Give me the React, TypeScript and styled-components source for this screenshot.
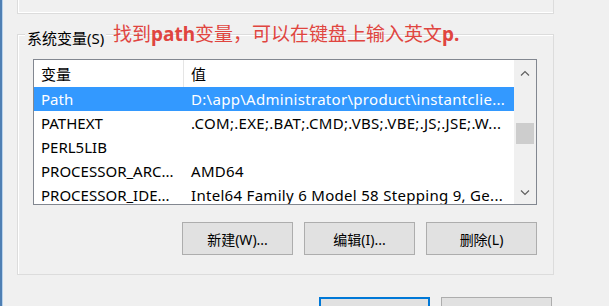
import React from "react";
import styled, { createGlobalStyle } from "styled-components";

const GlobalStyle = createGlobalStyle`
  html, body {
    margin: 0;
    padding: 0;
    background: #f0f0f0;
  }
  body {
    font-family: "Noto Sans", "Noto Sans CJK SC", sans-serif;
  }
`;

const rows = [
  { name: "Path", value: "D:\\app\\Administrator\\product\\instantclie...", selected: true },
  { name: "PATHEXT", value: ".COM;.EXE;.BAT;.CMD;.VBS;.VBE;.JS;.JSE;.W..." },
  { name: "PERL5LIB", value: "" },
  { name: "PROCESSOR_ARC...", value: "AMD64" },
  { name: "PROCESSOR_IDE...", value: "Intel64 Family 6 Model 58 Stepping 9, Ge..." },
];

const ChevronUp = () => (
  <svg width="10" height="6" viewBox="0 0 10 6">
    <polyline points="1,5.5 5,1.5 9,5.5" fill="none" stroke="#606060" strokeWidth="1.2" />
  </svg>
);

const ChevronDown = () => (
  <svg width="10" height="6" viewBox="0 0 10 6">
    <polyline points="1,0.5 5,4.5 9,0.5" fill="none" stroke="#606060" strokeWidth="1.2" />
  </svg>
);

const App = () => {
  return (
    <>
      <GlobalStyle />
      <Window>
        <Edge />
        <Main>
          <TopGroup />
          <SysGroup>
            <Legend>系统变量(S)</Legend>
            <ListBox>
              <ListBody>
                <HeaderRow>
                  <NameCell>变量</NameCell>
                  <ValueCell>值</ValueCell>
                </HeaderRow>
                {rows.map((r) => (
                  <Row key={r.name} $selected={!!r.selected}>
                    <NameCell>{r.name}</NameCell>
                    <ValueCell>{r.value}</ValueCell>
                  </Row>
                ))}
              </ListBody>
              <ScrollBar>
                <ChevronUp />
                <Track>
                  <Thumb />
                </Track>
                <ChevronDown />
              </ScrollBar>
            </ListBox>
            <ButtonRow>
              <Button>新建(W)...</Button>
              <Button>编辑(I)...</Button>
              <Button>删除(L)</Button>
            </ButtonRow>
          </SysGroup>
          {/* labels of these two sit below the visible area */}
          <Footer>
            <Button $primary aria-label="确定" />
            <Button aria-label="取消" />
          </Footer>
        </Main>
        <Note>
          找到<b>path</b>变量，可以在键盘上输入英文<b>p.</b>
        </Note>
      </Window>
    </>
  );
};

export default App;

const Window = styled.div`
  position: relative;
  display: flex;
  width: 609px;
  height: 306px;
  overflow: hidden;
  background: #f0f0f0;
`;

const Edge = styled.div`
  width: 3px;
  flex-shrink: 0;
  background: linear-gradient(to right, #4f7fb3 0, #4f7fb3 2px, #b9d3ec 2px);
`;

const Main = styled.div`
  display: flex;
  flex-direction: column;
  padding-left: 14px;
  width: 537px;

  & > * {
    flex-shrink: 0;
  }
`;

const TopGroup = styled.div`
  height: 14px;
  box-sizing: border-box;
  border: 1px solid #dcdcdc;
  border-top: none;
  box-shadow: inset 1px -1px 0 #fff;
`;

const SysGroup = styled.div`
  position: relative;
  margin-top: 20px;
  height: 241px;
  box-sizing: border-box;
  border: 1px solid #dcdcdc;
  box-shadow: inset 1px 1px 0 #fff;
  padding: 24px 15px 0 15px;
`;

const Legend = styled.span`
  position: absolute;
  left: 7px;
  top: -7px;
  padding: 0 2px;
  background: #f0f0f0;
  font-size: 15px;
  line-height: 20px;
  color: #000;
`;

const ListBox = styled.div`
  display: flex;
  width: 504px;
  height: 146px;
  box-sizing: border-box;
  border: 1px solid #828790;
  background: #fff;
  overflow: hidden;
`;

const ListBody = styled.div`
  flex: 1;
  display: flex;
  flex-direction: column;
  font-size: 15px;
  color: #000;
`;

const HeaderRow = styled.div`
  display: flex;
  height: 27px;
  align-items: center;
  flex-shrink: 0;

  & > div:first-child {
    border-right: 1px solid #e5e5e5;
    height: 27px;
  }
`;

const Row = styled.div<{ $selected: boolean }>`
  display: flex;
  height: 24px;
  align-items: center;
  flex-shrink: 0;
  background: ${(p) => (p.$selected ? "#3399ff" : "transparent")};
  color: ${(p) => (p.$selected ? "#fff" : "#000")};
`;

const NameCell = styled.div`
  width: 150px;
  box-sizing: border-box;
  padding-left: 7px;
  display: flex;
  align-items: center;
  white-space: nowrap;
  overflow: hidden;
`;

const ValueCell = styled.div`
  flex: 1;
  padding-left: 7px;
  white-space: nowrap;
  overflow: hidden;
  letter-spacing: 0.3px;
`;

const ScrollBar = styled.div`
  width: 22px;
  flex-shrink: 0;
  background: #f0f0f0;
  display: flex;
  flex-direction: column;
  align-items: center;
  padding: 10px 0 8px;
  box-sizing: border-box;
`;

const Track = styled.div`
  flex: 1;
  width: 100%;
  padding-top: 47px;
  box-sizing: border-box;
  display: flex;
  justify-content: center;
`;

const Thumb = styled.div`
  width: 18px;
  height: 21px;
  background: #cdcdcd;
`;

const ButtonRow = styled.div`
  display: flex;
  justify-content: flex-end;
  gap: 11px;
  margin-top: 17px;
  width: 504px;
`;

const Button = styled.button<{ $primary?: boolean }>`
  width: 111px;
  height: 33px;
  flex-shrink: 0;
  box-sizing: border-box;
  background: #e1e1e1;
  border: ${(p) => (p.$primary ? "2px solid #0078d7" : "1px solid #adadad")};
  font-family: "Noto Sans", "Noto Sans CJK SC", sans-serif;
  font-size: 14px;
  color: #000;
  padding: 0;
`;

const Footer = styled.div`
  display: flex;
  justify-content: flex-end;
  gap: 11px;
  margin-top: 22px;
  padding-right: 2px;
`;

const Note = styled.div`
  position: absolute;
  left: 113px;
  top: 20px;
  font-family: "Noto Sans CJK SC", sans-serif;
  font-size: 19px;
  line-height: 26px;
  color: #e0453f;
  white-space: nowrap;

  b {
    font-family: "Noto Sans", "Noto Sans CJK SC", sans-serif;
    font-weight: 700;
  }
`;
